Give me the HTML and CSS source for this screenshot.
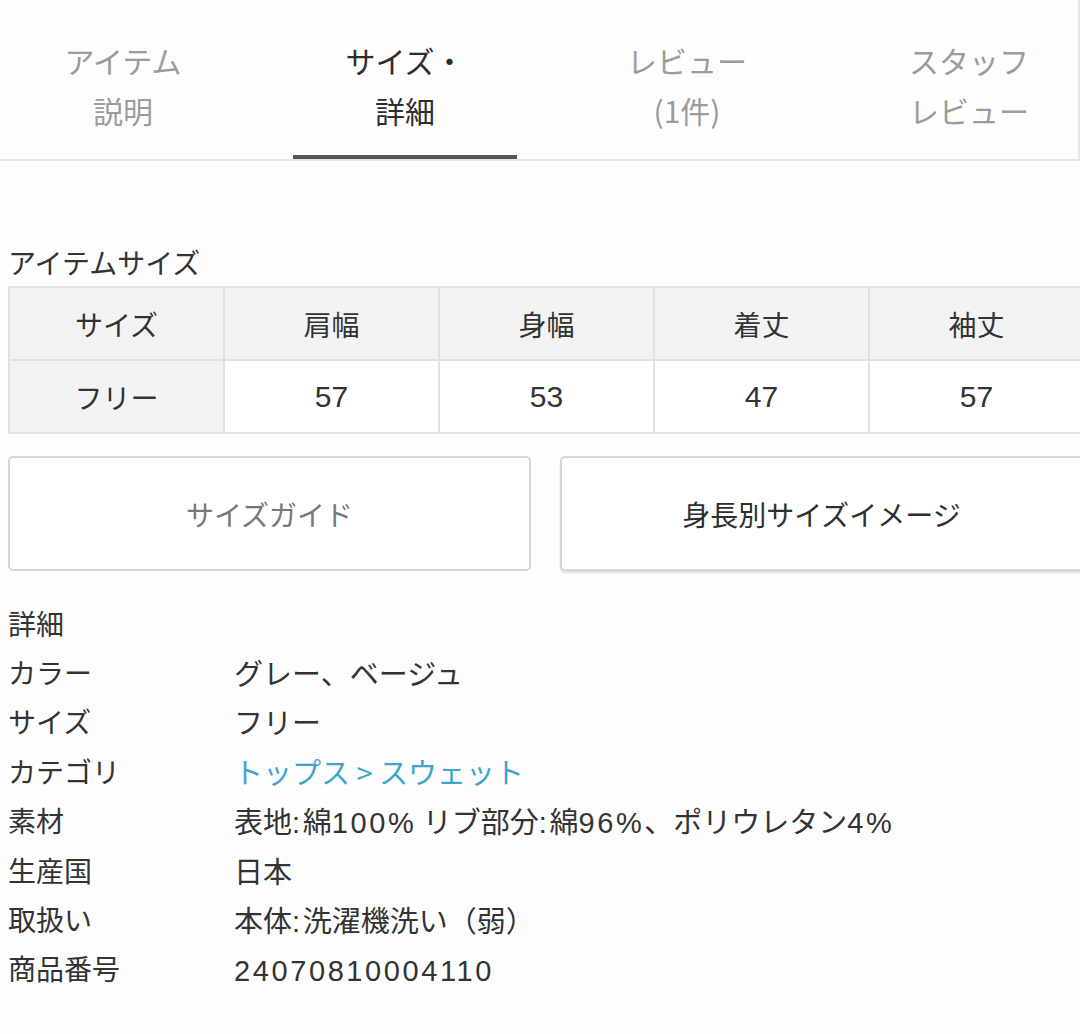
FILE: index.html
```html
<!DOCTYPE html>
<html lang="ja">
<head>
<meta charset="utf-8">
<link rel="stylesheet" href="styles.css">
</head>
<body>
<div class="page">
  <nav class="tabs">
    <div class="tab">アイテム<br>説明</div>
    <div class="tab active">サイズ・<br>詳細</div>
    <div class="tab">レビュー<br>(1件)</div>
    <div class="tab">スタッフ<br>レビュー</div>
  </nav>

  <section class="content">
    <h2 class="section-title">アイテムサイズ</h2>
    <table class="size-table">
      <tr class="head">
        <th>サイズ</th><th>肩幅</th><th>身幅</th><th>着丈</th><th>袖丈</th>
      </tr>
      <tr>
        <th>フリー</th><td>57</td><td>53</td><td>47</td><td>57</td>
      </tr>
    </table>

    <div class="buttons">
      <div class="btn btn-light">サイズガイド</div>
      <div class="btn btn-dark">身長別サイズイメージ</div>
    </div>

    <h3 class="details-title">詳細</h3>
    <dl class="details">
      <div class="row"><dt>カラー</dt><dd>グレー、ベージュ</dd></div>
      <div class="row"><dt>サイズ</dt><dd>フリー</dd></div>
      <div class="row"><dt>カテゴリ</dt><dd><span class="link">トップス &gt; スウェット</span></dd></div>
      <div class="row"><dt>素材</dt><dd>表地<span class="num">:</span>綿<span class="num">100%</span> リブ部分<span class="num">:</span>綿<span class="num">96%</span>、ポリウレタン<span class="num">4%</span></dd></div>
      <div class="row"><dt>生産国</dt><dd>日本</dd></div>
      <div class="row"><dt>取扱い</dt><dd>本体<span class="num">:</span>洗濯機洗い（弱）</dd></div>
      <div class="row"><dt>商品番号</dt><dd><span class="num">24070810004110</span></dd></div>
    </dl>
  </section>
</div>
</body>
</html>
```

FILE: styles.css
```css
* { box-sizing: border-box; }

html, body {
  margin: 0;
  padding: 0;
  background: #fdfdfd;
}

body {
  font-family: "Noto Sans CJK JP", "Noto Sans", sans-serif;
  color: #333;
  width: 1080px;
  height: 1034px;
  overflow: hidden;
}

.page {
  width: 1080px;
  overflow: hidden;
}

.tabs {
  display: flex;
  border-bottom: 2px solid #e6e6e6;
  border-right: 2px solid #e6e6e6;
  width: 1080px;
  overflow: hidden;
}

.tab {
  flex: 0 0 282px;
  text-align: center;
  font-size: 30px;
  line-height: 50px;
  padding: 35px 0 24px;
  color: #9c9c9c;
  position: relative;
}

.tab:first-child {
  margin-left: -18px;
}

.tab.active {
  color: #2e2e2e;
}

.tab.active::after {
  content: "";
  position: absolute;
  left: 29px;
  right: 29px;
  bottom: 0;
  height: 4px;
  background: #555;
}

.content {
  padding: 0 0 0 8px;
}

.section-title {
  margin: 81px 0 4px;
  font-size: 28px;
  font-weight: normal;
  line-height: 40px;
  color: #333;
}

.size-table {
  border-collapse: collapse;
  table-layout: fixed;
  width: 1075px;
}

.size-table th,
.size-table td {
  width: 215px;
  height: 73px;
  border: 2px solid #e2e2e2;
  text-align: center;
  font-size: 28px;
  font-weight: normal;
  color: #333;
  padding: 0;
}

.size-table th {
  background: #f3f3f3;
}

.size-table td {
  background: #fff;
  font-family: "Liberation Sans", "Noto Sans CJK JP", sans-serif;
  font-size: 30px;
}

.buttons {
  display: grid;
  grid-template-columns: 523px 523px;
  column-gap: 29px;
  margin-top: 22px;
}

.btn {
  height: 115px;
  border: 2px solid #d6d6d6;
  border-radius: 5px;
  background: #fff;
  display: flex;
  align-items: center;
  justify-content: center;
  font-size: 28px;
}

.btn-light {
  color: #777;
}

.btn-dark {
  color: #2e2e2e;
  box-shadow: 0 2px 2px rgba(0, 0, 0, 0.12);
}

.details-title {
  margin: 27px 0 0;
  font-size: 28px;
  font-weight: normal;
  line-height: 50px;
  height: 50px;
  color: #333;
}

.details {
  margin: 0;
}

.details .row {
  display: flex;
  font-size: 29px;
  line-height: 49.4px;
  height: 49.4px;
  overflow: hidden;
}

.details dt {
  width: 226px;
  flex: 0 0 226px;
  font-size: 28px;
}

.details dd {
  margin: 0;
  white-space: nowrap;
}

.num {
  font-family: "Liberation Sans", "Noto Sans CJK JP", sans-serif;
  letter-spacing: 2.6px;
  line-height: 1;
}

.link {
  color: #3fa3cc;
}
```
